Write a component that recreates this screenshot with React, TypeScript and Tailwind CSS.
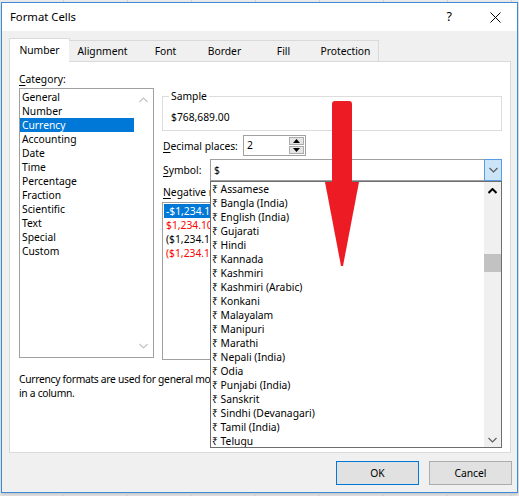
import React from "react";

const categories = [
  "General",
  "Number",
  "Currency",
  "Accounting",
  "Date",
  "Time",
  "Percentage",
  "Fraction",
  "Scientific",
  "Text",
  "Special",
  "Custom",
];

const symbols = [
  "Assamese",
  "Bangla (India)",
  "English (India)",
  "Gujarati",
  "Hindi",
  "Kannada",
  "Kashmiri",
  "Kashmiri (Arabic)",
  "Konkani",
  "Malayalam",
  "Manipuri",
  "Marathi",
  "Nepali (India)",
  "Odia",
  "Punjabi (India)",
  "Sanskrit",
  "Sindhi (Devanagari)",
  "Tamil (India)",
  "Telugu",
];

const negatives = [
  { text: "-$1,234.10", cls: "bg-[#0078d7] text-white" },
  { text: "$1,234.10", cls: "text-[#ff0000]" },
  { text: "($1,234.10)", cls: "text-black" },
  { text: "($1,234.10)", cls: "text-[#ff0000]" },
];

const tabs = [
  { label: "Number", w: "w-[61px]" },
  { label: "Alignment", w: "w-[68px]" },
  { label: "Font", w: "w-[60px]" },
  { label: "Border", w: "w-[60px]" },
  { label: "Fill", w: "w-[60px]" },
  { label: "Protection", w: "w-[66px]" },
];

function Chevron({ up, className }: { up?: boolean; className?: string }) {
  return (
    <svg width="9" height="6" viewBox="0 0 9 6" className={className}>
      <path
        d={up ? "M0.5 5 L4.5 1 L8.5 5" : "M0.5 1 L4.5 5 L8.5 1"}
        fill="none"
        stroke="currentColor"
        strokeWidth="1.2"
      />
    </svg>
  );
}

function GridStrip() {
  return (
    <div className="flex h-full">
      {Array.from({ length: 9 }).map((_, i) => (
        <div key={i} className="h-full w-[64px] shrink-0 border-r border-[#d0d0d0]" />
      ))}
    </div>
  );
}

export default function App() {
  return (
    <div className="relative w-[519px] h-[496px] overflow-hidden bg-[#e9e9e9] font-['Segoe_UI','Noto_Sans',sans-serif] text-[10.3px] leading-[14px] text-black">
      <div className="h-[2px] overflow-hidden">
        <GridStrip />
      </div>

      {/* dialog */}
      <div className="ml-[1px] w-[517px] h-[491px] border border-[#3d8ad6] bg-[#f0f0f0] flex flex-col shadow-[0_2px_3px_rgba(0,0,0,0.15)]">
        {/* title bar */}
        <div className="h-[28px] bg-white flex items-center pl-[8px] shrink-0">
          <span className="text-[11.3px]">Format Cells</span>
          <span className="ml-auto mr-[38px] text-[12.5px]">?</span>
          <svg width="11" height="11" viewBox="0 0 11 11" className="mr-[16px]">
            <path d="M0.5 0.5 L10.5 10.5 M10.5 0.5 L0.5 10.5" stroke="#000" strokeWidth="1" />
          </svg>
        </div>

        {/* tabs */}
        <div className="relative z-10 flex items-end ml-[7px] mt-[7px] h-[24px] -mb-px">
          {tabs.map((t, i) => (
            <div
              key={t.label}
              className={
                i === 0
                  ? `${t.w} h-[24px] bg-white border-t border-l border-r border-[#d9d9d9] flex items-center justify-center pb-[1px]`
                  : `${t.w} h-[22px] bg-[#f0f0f0] border-t border-r border-b border-[#d9d9d9] -ml-px flex items-center justify-center`
              }
            >
              {t.label}
            </div>
          ))}
        </div>

        {/* panel */}
        <div className="ml-[7px] w-[502px] h-[392px] shrink-0 bg-white border border-[#d9d9d9] pl-[9px] pt-[10px]">
          <div className="flex">
            {/* category column */}
            <div className="w-[135px] shrink-0">
              <div>
                <u className="underline-offset-2">C</u>ategory:
              </div>
              <div className="mt-[2px] h-[270px] border border-[#a0a0a0] flex">
                <div className="w-[114px] pt-px">
                  {categories.map((c) => (
                    <div
                      key={c}
                      className={`h-[14px] pl-[2px] ${c === "Currency" ? "bg-[#0078d7] text-white" : ""}`}
                    >
                      {c}
                    </div>
                  ))}
                </div>
                <div className="flex-1 flex flex-col items-center justify-between pt-[8px] pb-[8px] text-[#c4c4c4]">
                  <Chevron up />
                  <Chevron />
                </div>
              </div>
            </div>

            {/* right column */}
            <div className="ml-[8px] w-[340px] mt-[17px]">
              <fieldset className="border border-[#dcdcdc] pl-[6px] pt-[7px] pb-[6px]">
                <legend className="px-[2px]">Sample</legend>
                <div className="pl-[2px]">$768,689.00</div>
              </fieldset>

              <div className="mt-[4px] h-[21px] flex items-center">
                <div className="w-[81px] pl-px">
                  <u className="underline-offset-2">D</u>ecimal places:
                </div>
                <div className="w-[63px] h-[21px] border border-[#a0a0a0] bg-white flex">
                  <div className="flex-1 pl-[3px] leading-[19px]">2</div>
                  <div className="w-[16px] flex flex-col gap-px py-px pr-px">
                    <div className="flex-1 bg-[#e5e5e5] border border-[#acacac] flex items-center justify-center">
                      <svg width="7" height="4" viewBox="0 0 7 4">
                        <path d="M0 4 L3.5 0 L7 4 Z" fill="#000" />
                      </svg>
                    </div>
                    <div className="flex-1 bg-[#e5e5e5] border border-[#acacac] flex items-center justify-center">
                      <svg width="7" height="4" viewBox="0 0 7 4">
                        <path d="M0 0 L3.5 4 L7 0 Z" fill="#000" />
                      </svg>
                    </div>
                  </div>
                </div>
              </div>

              <div className="mt-[3px] h-[22px] flex items-center">
                <div className="w-[48px] pl-px">
                  <u className="underline-offset-2">S</u>ymbol:
                </div>
                <div className="relative w-[292px] h-[22px] flex">
                  <div className="flex-1 border-y border-l border-[#a0a0a0] bg-white pl-[3px] leading-[20px]">
                    $
                  </div>
                  <div className="w-[18px] border border-[#569de5] bg-[#cce4f7] flex items-center justify-center text-[#5a5a5a]">
                    <Chevron />
                  </div>

                  {/* open dropdown list */}
                  <div className="absolute left-0 top-full z-20 w-[292px] h-[267px] border border-[#6e6e6e] bg-white flex overflow-hidden">
                    <div className="flex-1">
                      {symbols.map((s) => (
                        <div key={s} className="h-[14px] pl-px whitespace-nowrap">
                          ₹ {s}
                        </div>
                      ))}
                    </div>
                    <div className="w-[17px] bg-[#f0f0f0] flex flex-col items-center">
                      <div className="h-[17px] flex items-center justify-center text-black">
                        <svg width="9" height="6" viewBox="0 0 9 6">
                          <path d="M0.5 5 L4.5 1 L8.5 5" fill="none" stroke="currentColor" strokeWidth="2" />
                        </svg>
                      </div>
                      <div className="mt-[55px] w-[17px] h-[18px] bg-[#c2c2c2]" />
                      <div className="mt-auto mb-[4px] text-[#606060]">
                        <Chevron />
                      </div>
                    </div>
                  </div>
                </div>
              </div>

              <div className="mt-[4px] pl-px whitespace-nowrap">
                <u className="underline-offset-2">N</u>egative numbers:
              </div>
              <div className="mt-[3px] h-[158px] border border-[#a0a0a0] p-px">
                {negatives.map((n, i) => (
                  <div key={i} className={`h-[14px] pl-[2px] w-[80px] ${n.cls}`}>
                    {n.text}
                  </div>
                ))}
              </div>
            </div>
          </div>

          <div className="mt-[12px] whitespace-nowrap tracking-[-0.3px]">
            Currency formats are used for general monetary values. Use Accounting formats to align decimal points
            <br />
            in a column.
          </div>
        </div>

        {/* buttons */}
        <div className="mt-[8px] flex justify-end gap-[10px] pr-[5px]">
          <button className="w-[83px] h-[24px] border border-[#0078d7] bg-[#e1e1e1]">OK</button>
          <button className="w-[83px] h-[24px] border border-[#adadad] bg-[#e1e1e1]">Cancel</button>
        </div>
      </div>

      <div className="h-[3px] overflow-hidden">
        <GridStrip />
      </div>

      {/* red annotation arrow */}
      <svg
        width="35"
        height="166"
        viewBox="0 0 35 166"
        className="absolute left-[325px] top-[101px] z-30"
      >
        <path d="M7 3 Q7 0 10 0 L24 0 Q27 0 27 3 L27 81 L7 81 Z" fill="#ed1c24" />
        <path d="M0 81 L34 81 L18 165 L16 165 Z" fill="#ed1c24" />
      </svg>
    </div>
  );
}
